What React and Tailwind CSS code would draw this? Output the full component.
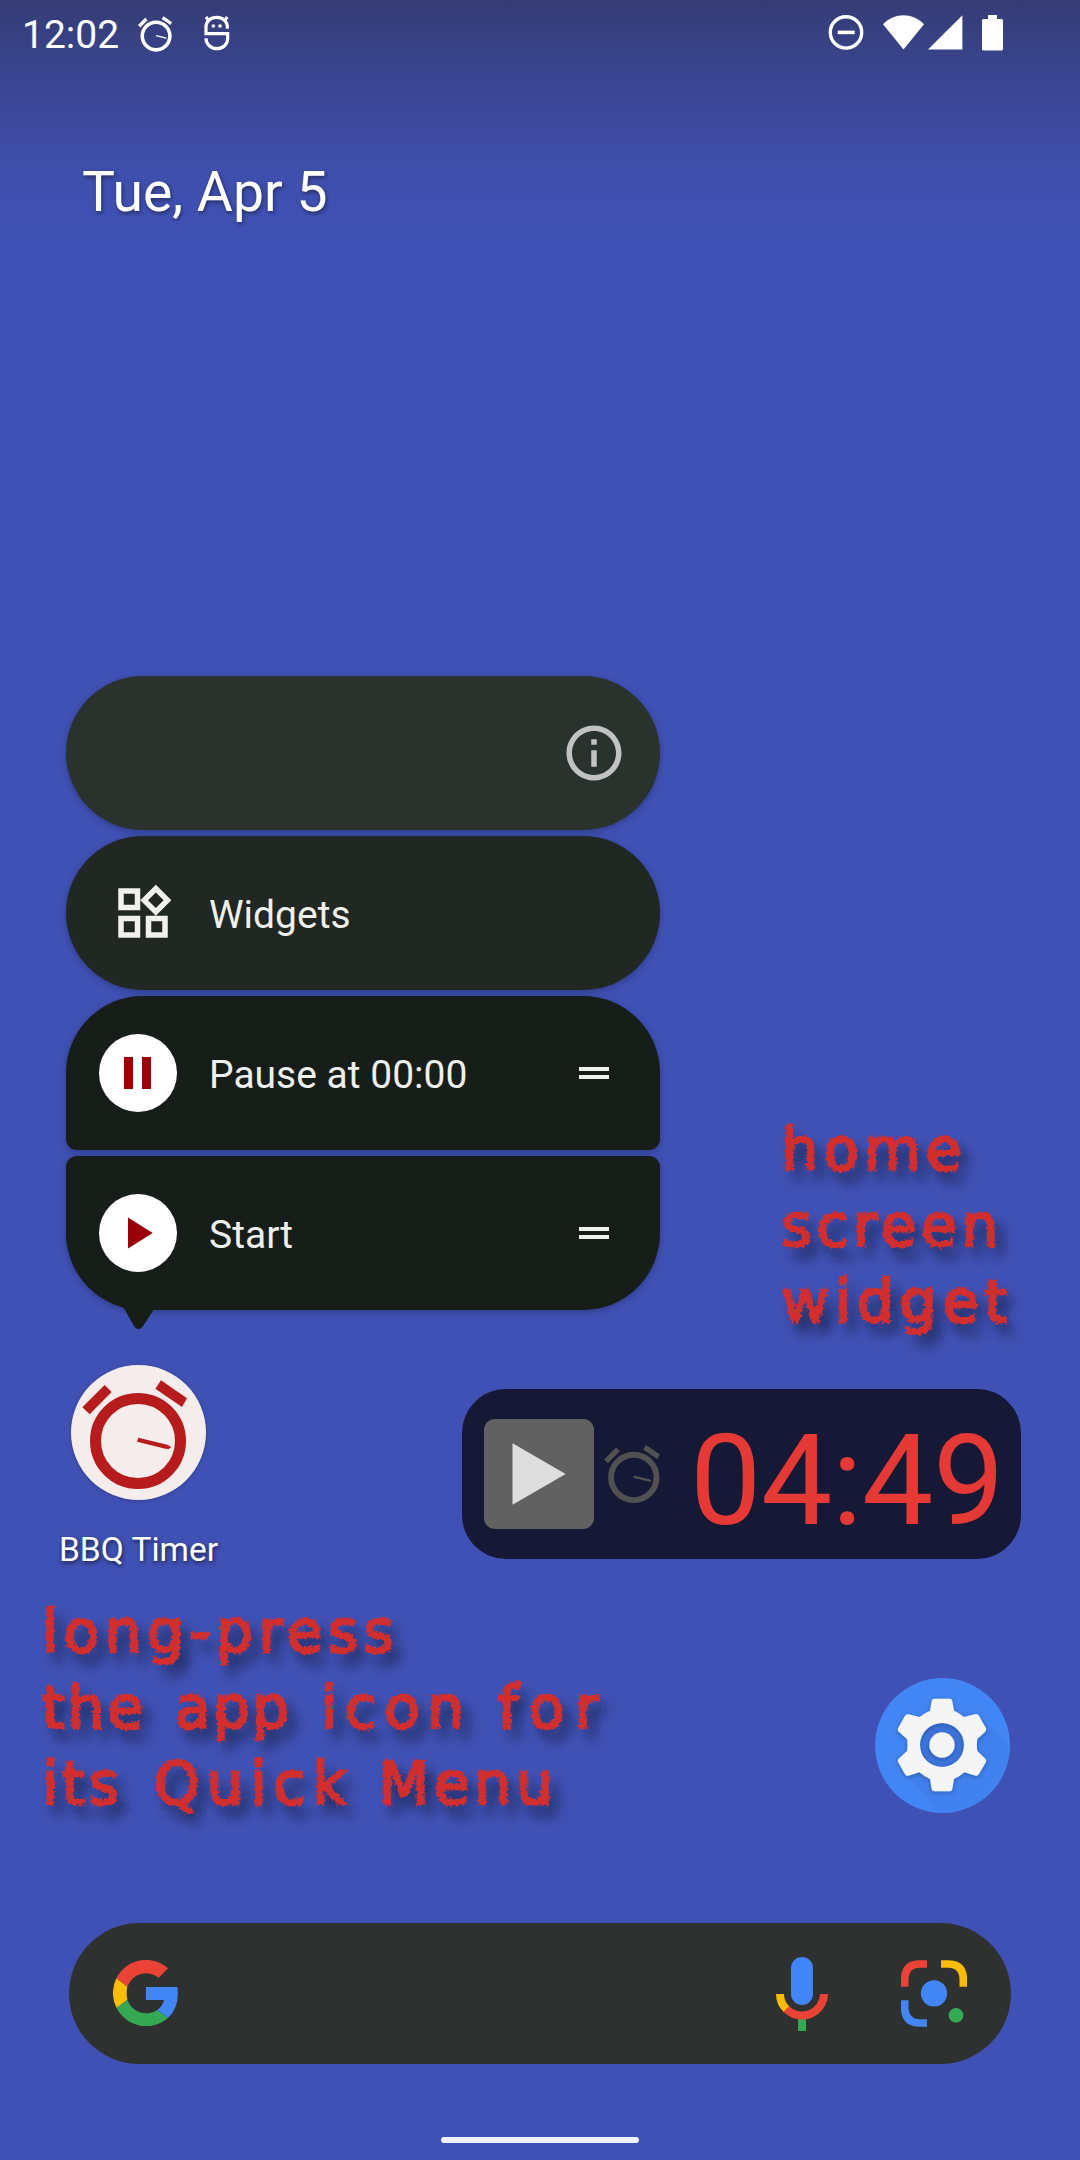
const CLOCK_VIEW = '127 121 314 326';

function ClockGlyph({ className, viewBox = CLOCK_VIEW, ring = 33 }) {
  return (
    <svg className={className} viewBox={viewBox} fill="currentColor">
      <circle cx="294" cy="303" r={144 - ring / 2} fill="none" stroke="currentColor" strokeWidth={ring} />
      <path d="M194 135L215 156L149 223L127 202Z" />
      <path d="M363 121L441 175L426 201L346 146Z" />
      <path d="M295 293L382 314L394 322L386 327L376 326L291 305Z" />
    </svg>
  );
}

function StatusBar() {
  return (
    <header className="flex h-[68px] items-start text-white">
      <div className="flex flex-1 items-start pl-[22px]">
        <span className="mt-3 w-[116px] text-[39px] leading-[46px]">12:02</span>
        <ClockGlyph className="mt-[15.5px] h-9 w-[34px]" ring={33} />
        <svg className="ml-8 mt-[15px] h-9 w-[26px]" viewBox="611 46 78 108" fill="none" stroke="currentColor" strokeWidth="9.500">
          <path d="M681 87V82C681 65 667 53 649 53S617 65 617 82V102H682V116C682 134 668 147 650 147S617 134 617 116" />
          <path d="M617 52L626 63M681 52L672 63" />
          <circle cx="639" cy="79" r="5.500" fill="currentColor" stroke="none" />
          <circle cx="659" cy="79" r="5.500" fill="currentColor" stroke="none" />
        </svg>
      </div>
      <div className="flex items-start pr-[77px] pt-[15px]">
        <svg className="h-9 w-9" viewBox="0 0 36 36" fill="none" stroke="currentColor">
          <circle cx="18" cy="17.4" r="15.7" strokeWidth="3.4" />
          <path d="M9.7 17.4H26.7" strokeWidth="3.6" />
        </svg>
        <svg className="ml-[19px] h-[35px] w-[41px]" viewBox="0 0 41 35" fill="currentColor">
          <path d="M0 9.2C12 -2.6 29 -2.6 41 9.2L20.5 34.5Z" />
        </svg>
        <svg className="ml-[3.5px] h-[35px] w-[35px]" viewBox="0 0 35 35" fill="currentColor">
          <path d="M34.4 0.3V34.6H0Z" />
        </svg>
        <svg className="ml-[19.5px] h-9 w-[21px]" viewBox="0 0 21 36" fill="currentColor">
          <path d="M6 0H15V4H19.5Q21 4 21 5.500V34Q21 35.600 19.500 35.600H1.500Q0 35.600 0 34V5.500Q0 4 1.500 4H6Z" />
        </svg>
      </div>
    </header>
  );
}

function DragHandle() {
  return (
    <span className="mr-[51px] flex w-[30px] flex-col gap-1">
      <span className="h-1 bg-[#efefec]" />
      <span className="h-1 bg-[#efefec]" />
    </span>
  );
}

function MenuItem({ shape, icon, label, end }) {
  return (
    <div className={`flex h-[154px] items-center shadow-[0_2px_7px_rgba(0,0,0,0.25)] ${shape}`}>
      <span className="flex w-[143px] justify-start pl-[32.5px]">{icon}</span>
      <span className="flex-1 pt-[3px] text-[39px] leading-[46px] text-[#efefec]">{label}</span>
      {end}
    </div>
  );
}

function QuickMenu() {
  return (
    <nav className="relative flex w-[594px] flex-col gap-1.5">
      <MenuItem
        shape="rounded-[77px] bg-[#29322d]"
        end={
          <svg className="mr-[33px] h-[66px] w-[66px] text-[#c1c3c2]" viewBox="0 0 24 24" fill="currentColor">
            <path d="M11 7h2v2h-2zm0 4h2v6h-2zm1-9C6.480 2 2 6.480 2 12s4.480 10 10 10 10-4.480 10-10S17.520 2 12 2zm0 18c-4.410 0-8-3.590-8-8s3.590-8 8-8 8 3.590 8 8-3.590 8-8 8z" />
          </svg>
        }
      />
      <MenuItem
        shape="rounded-[77px] bg-[#212723]"
        label="Widgets"
        icon={
          <svg className="ml-[11px] h-[66px] w-[66px] text-[#f1f1ec]" viewBox="0 0 24 24" fill="currentColor">
            <path d="M16.66 4.520l2.830 2.830-2.830 2.830-2.830-2.830 2.830-2.830M9 5v4H5V5h4m10 10v4h-4v-4h4M9 15v4H5v-4h4m7.660-13.310L11 7.340 16.660 13l5.660-5.660-5.660-5.650zM11 3H3v8h8V3zm10 10h-8v8h8v-8zm-10 0H3v8h8v-8z" />
          </svg>
        }
      />
      <MenuItem
        shape="rounded-t-[77px] rounded-b-[11px] bg-[#171d19]"
        label="Pause at 00:00"
        icon={
          <span className="flex h-[78.5px] w-[78.5px] items-center justify-center gap-[9px] rounded-full bg-white">
            <span className="h-8 w-[9px] bg-[#9a0007]" />
            <span className="h-8 w-[9px] bg-[#9a0007]" />
          </span>
        }
        end={<DragHandle />}
      />
      <MenuItem
        shape="rounded-t-[11px] rounded-b-[77px] bg-[#171d19]"
        label="Start"
        icon={
          <span className="flex h-[78.5px] w-[78.5px] items-center justify-center rounded-full bg-white pl-[5px]">
            <svg className="h-8 w-[25px]" viewBox="0 0 25 32" fill="#9a0007">
              <path d="M0 0.500L24.700 16L0 31.500Z" />
            </svg>
          </span>
        }
        end={<DragHandle />}
      />
      <svg className="absolute left-14 top-[630px] h-[24px] w-8" viewBox="0 0 32 24" fill="#171d19">
        <path d="M0 0L3 4L12.200 20.500Q16.500 25.500 20.800 20.500L31.500 4V0Z" />
      </svg>
    </nav>
  );
}

const chalk =
  "font-['DejaVu_Sans',sans-serif] text-[58px] leading-[76px] text-[#d32f2f] [-webkit-text-stroke:2.500px_#d32f2f] [text-shadow:8px_11px_13px_rgba(0,0,0,0.700)] [filter:url(#chalk)] whitespace-nowrap";

function ChalkFilter() {
  return (
    <svg className="absolute h-0 w-0">
      <filter id="chalk" x="-10%" y="-20%" width="120%" height="140%">
        <feTurbulence type="fractalNoise" baseFrequency="0.35" numOctaves="2" seed="4" result="noise" />
        <feDisplacementMap in="SourceGraphic" in2="noise" scale="6" xChannelSelector="R" yChannelSelector="G" />
      </filter>
    </svg>
  );
}

function SettingsIcon() {
  return (
    <svg className="h-[145px] w-[145px]" viewBox="60 69 435 435">
      <defs>
        <linearGradient id="longShadow" x1="0" y1="0" x2="1" y2="1">
          <stop offset="0.300" stopColor="#3b74dc" />
          <stop offset="1" stopColor="#4285f4" stopOpacity="0.500" />
        </linearGradient>
        <clipPath id="disc">
          <circle cx="277.500" cy="286.500" r="202.500" />
        </clipPath>
        <filter id="soft" x="-20%" y="-20%" width="140%" height="140%">
          <feDropShadow dx="0" dy="4" stdDeviation="6" floodColor="#123" floodOpacity="0.300" />
        </filter>
      </defs>
      <circle cx="277.500" cy="286.500" r="202.500" fill="#4285f4" />
      <g clipPath="url(#disc)">
        <path d="M385 195L550 360V560H350L168 375Z" fill="url(#longShadow)" opacity="0.350" />
        <circle cx="276" cy="285" r="66" fill="#3c74dc" />
      </g>
      <g filter="url(#soft)" fill="#f5f5f5">
        <path
          fillRule="evenodd"
          d="M253 146H299Q306 146 307 153L312 182Q327 188 342 201L377 192Q383 191 387 197L408 235Q410 241 406 245L382 267Q379 285 382 303L406 326Q410 330 408 336L387 372Q383 379 377 377L343 367Q327 381 312 387L307 417Q306 424 299 424H253Q246 424 245 417L240 387Q225 381 208 367L175 377Q169 379 165 373L144 336Q142 330 146 326L171 303Q174 285 171 267L146 245Q142 241 144 235L165 197Q169 191 175 193L209 201Q225 188 240 182L245 153Q246 146 253 146ZM276 219A66 66 0 1 0 276 351A66 66 0 1 0 276 219Z"
        />
        <circle cx="276" cy="285" r="38" />
      </g>
    </svg>
  );
}

function TimerWidget() {
  return (
    <section className="flex h-[170px] w-[559px] items-center rounded-[44px] bg-[#151935] pl-[22px]">
      <span className="flex h-[110px] w-[110px] items-center justify-center rounded-[11px] bg-[#616161]">
        <svg className="h-[62px] w-[54px]" viewBox="0 0 54 62" fill="#dedede">
          <path d="M0.500 0.300L53.700 31L0.500 61.700Z" />
        </svg>
      </span>
      <ClockGlyph className="ml-[9.5px] h-[58px] w-[56px] text-[#515151]" />
      <span className="ml-[30.5px] pt-[14px] text-[127px] leading-[150px] tracking-[-0.5px] text-[#e53935]">04:49</span>
    </section>
  );
}

function SearchBar() {
  return (
    <section className="ml-[69px] flex h-[141px] w-[942px] items-center rounded-full bg-[#2f3130]">
      <svg className="-mt-0.5 ml-11 h-[66px] w-[65px]" viewBox="189 180 195 198">
        <path fill="#ea4335" d="M354 205L326 233A60 60 0 0 0 232 260L199 235A99 99 0 0 1 354 205Z" />
        <path fill="#fbbc05" d="M199 235L232 260Q228 279 232 299L200 324Q178 280 199 235Z" />
        <path fill="#34a853" d="M200 324L232 299A60 60 0 0 0 322 330L354 354A99 99 0 0 1 200 324Z" />
        <path fill="#4285f4" d="M288 261H382Q390 320 354 354L322 330Q338 318 342 300H288Z" />
      </svg>
      <svg className="ml-[598px] h-[74px] w-[52px]" viewBox="108 171 156 222" fill="none">
        <rect x="153" y="171" width="66" height="144" rx="33" fill="#4285f4" />
        <path d="M174 350H198V393H174Z" fill="#34a853" />
        <path d="M120 282C120 301 128 317 140 328" stroke="#fbbc05" strokeWidth="24" />
        <path d="M139 327A66 66 0 0 0 252 282" stroke="#ea4335" strokeWidth="24" />
      </svg>
      <svg className="ml-[73px] h-[67px] w-[66px]" viewBox="483 180 198 201" fill="none" strokeWidth="23">
        <path d="M494 260V240Q494 192 540 192H561" stroke="#ea4335" />
        <path d="M603 192H624Q670 192 670 240V260" stroke="#fbbc05" />
        <path d="M494 301V321Q494 369 540 369H561" stroke="#4285f4" />
        <circle cx="582" cy="280" r="39.500" fill="#4285f4" />
        <circle cx="648" cy="346" r="22" fill="#34a853" />
      </svg>
    </section>
  );
}

export default function App() {
  return (
    <main className="relative flex h-[2160px] w-[1080px] flex-col overflow-hidden bg-[#3f51b5] bg-[linear-gradient(180deg,#353c76_0px,#38438a_60px,#3b4899_105px,#3e4ea9_155px,#3f50b2_205px,#3f51b5_250px)] font-['Roboto',sans-serif]">
      <ChalkFilter />
      <StatusBar />
      <h1 className="ml-[82px] mt-[92px] h-[65px] text-[55.3px] leading-[66px] text-white [text-shadow:1px_2px_4px_rgba(0,0,0,0.450)]">
        Tue, Apr 5
      </h1>

      <div className="mt-[451px] flex h-[713px] items-start pl-[66px]">
        <QuickMenu />
        <div className={`ml-[121.5px] mt-[436px] flex flex-col ${chalk}`}>
          <span className="tracking-[5.2px]">home</span>
          <span className="tracking-[4.8px]">screen</span>
          <span className="tracking-[6px]">widget</span>
        </div>
      </div>

      <div className="flex h-[200px] items-start">
        <div className="-mt-6 flex w-[277px] flex-col items-center">
          <span className="flex h-[135px] w-[135px] rounded-full bg-[#f5edec] shadow-[0_1px_4px_rgba(0,0,0,0.200)]">
            <ClockGlyph className="h-[135px] w-[135px] text-[#b71c1c]" viewBox="93 75 405 405" />
          </span>
          <span className="mt-[30px] text-[33.5px] leading-10 text-white [text-shadow:1px_2px_4px_rgba(0,0,0,0.600)]">BBQ Timer</span>
        </div>
        <div className="ml-[185px]">
          <TimerWidget />
        </div>
      </div>

      <div className="flex h-[334px] items-start justify-between pl-[42px] pr-[65px]">
        <div className={`mt-[5px] flex flex-col ${chalk}`}>
          <span className="tracking-[5.6px]">long-press</span>
          <span className="flex">
            <span className="w-[133px] tracking-[3px]">the</span>
            <span className="w-[146px] tracking-[2.4px]">app</span>
            <span className="w-[177px] tracking-[7.6px]">icon</span>
            <span className="tracking-[10.5px]">for</span>
          </span>
          <span className="flex">
            <span className="w-[112px] tracking-[4px]">its</span>
            <span className="w-[225px] tracking-[7px]">Quick</span>
            <span className="tracking-[4.8px]">Menu</span>
          </span>
        </div>
        <div className="mt-[84px]">
          <SettingsIcon />
        </div>
      </div>

      <SearchBar />
      <div className="mx-auto mt-[73px] h-1.5 w-[198px] rounded-full bg-[#f0f1f9]" />
    </main>
  );
}
